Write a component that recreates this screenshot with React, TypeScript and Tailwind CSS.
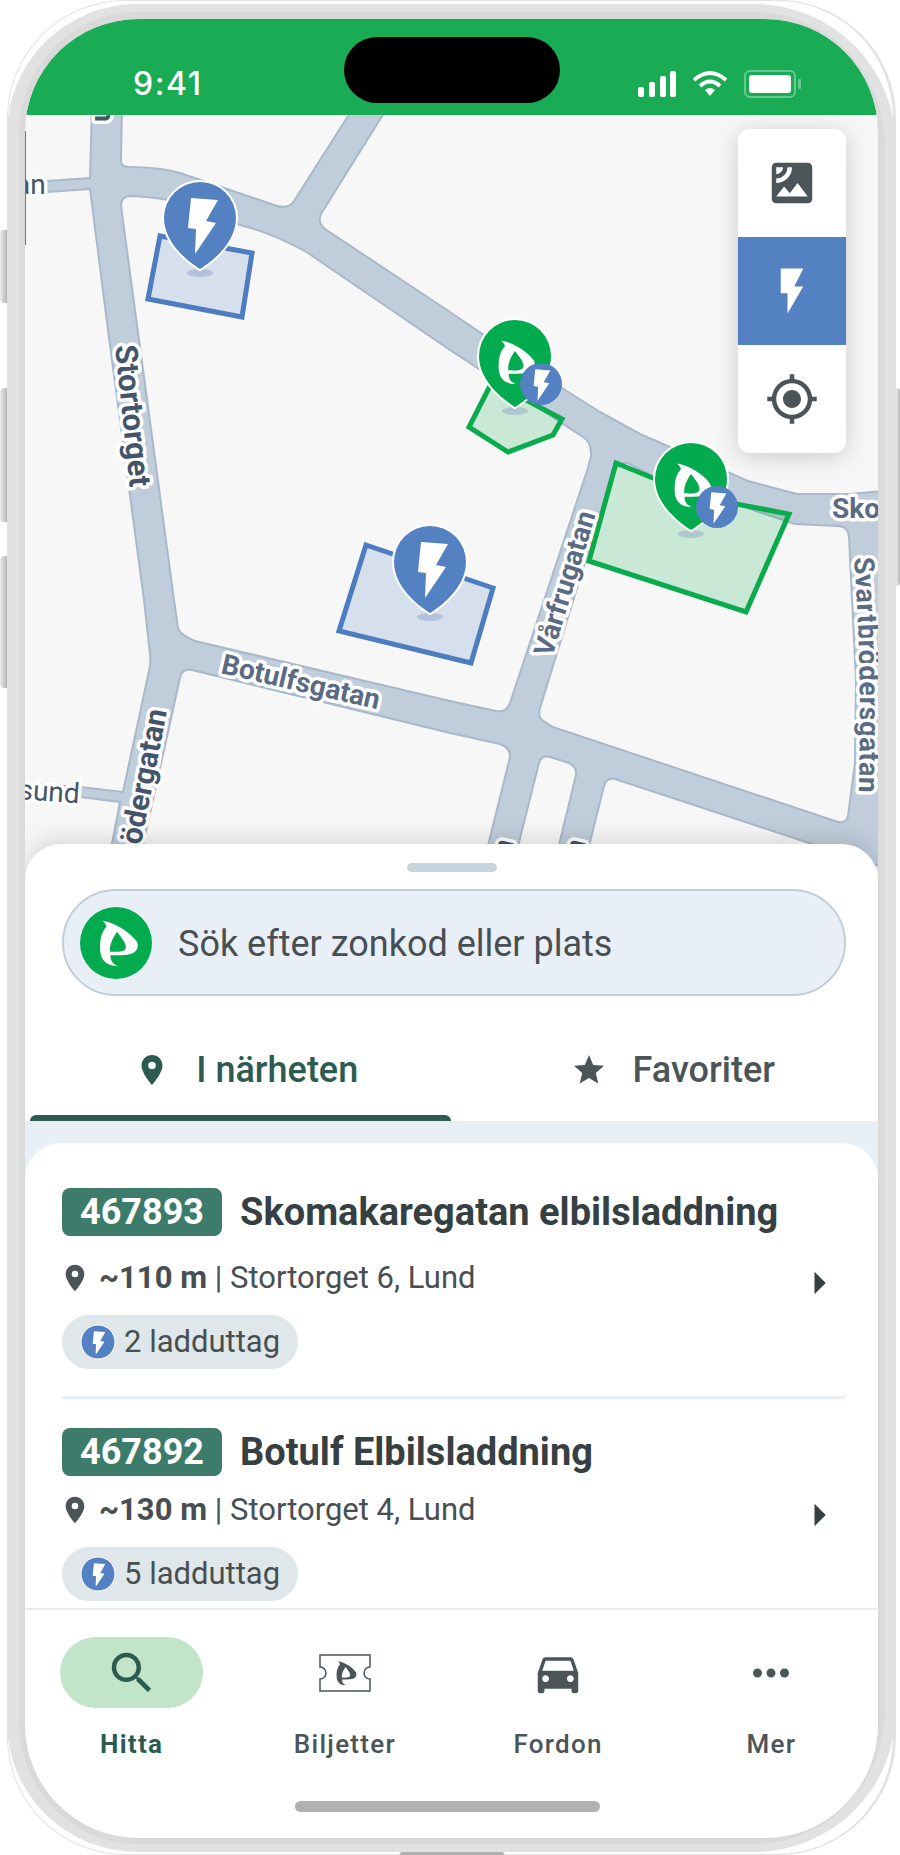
import { ReactNode } from 'react';
import { IconType } from 'react-icons';
import {
  MdArrowRight,
  MdDirectionsCar,
  MdFlashOn,
  MdMoreHoriz,
  MdMyLocation,
  MdPlace,
  MdSatellite,
  MdSearch,
  MdStar
} from 'react-icons/md';
import clsx from 'clsx';

interface Zone {
  code: string;
  name: string;
  distance: string;
  address: string;
  outlets: number;
}

interface Label {
  text: string;
  x: number;
  y: number;
  angle: number;
  size?: number;
  anchor?: 'start' | 'end';
  tone: string;
}

const zones: Zone[] = [
  { code: '467893', name: 'Skomakaregatan elbilsladdning', distance: '~110 m', address: 'Stortorget 6, Lund', outlets: 2 },
  { code: '467892', name: 'Botulf Elbilsladdning', distance: '~130 m', address: 'Stortorget 4, Lund', outlets: 5 }
];

// City blocks, drawn on top of the street colour
const blocks = [
  'M20 105 H92 L90 178 L47 181 L20 182 Z',
  'M20 192 L47 192 L90 189 L108 330 L144 600 L150 654 Q151 662 149 671 L123 792 L80 787 L20 783 Z',
  'M20 794 L80 797 L120 802 L103 890 H20 Z',
  'M122 105 L121 160 Q121 167 128 167 Q160 167 180 173 L277 206 Q289 209 294 201 L355 105 Z',
  'M389 105 L321 214 Q317 222 325 229 L450 312 L562 388 L600 412 L640 434 L732 474 L748 481 L797 494 L850 494 L885 491 V105 Z',
  'M121 206 Q121 196 131 196 Q165 197 190 206 L240 225 Q275 234 308 253 L450 350 L583 437 Q592 443 591 456 L588 468 L510 703 Q506 713 496 711 L450 701 L195 641 Q179 634 178 628 L174 600 L137 325 Z',
  'M540 708 Q537 718 545 722 L553 727 L835 821 Q846 825 848 816 L855 763 L856 680 L853 620 L849 537 Q848 526 838 526 L795 524 L652 476 L630 464 Q618 460 613 472 Z',
  'M578 890 L604 786 Q606 777 615 779 L812 844 L885 868 V890 Z',
  'M507 890 L539 763 Q541 755 550 757 L566 762 Q577 765 576 775 L548 890 Z',
  'M133 890 L180 678 Q182 668 192 670 L450 733 L500 744 Q511 748 510 757 L477 890 Z'
];

const areas = [
  { points: '160,236 252,253 242,317 148,299', color: '#4d7cc1' },
  { points: '366,545 493,588 471,663 339,631', color: '#4d7cc1' },
  { points: '492,382 562,419 553,435 508,452 469,427', color: '#0aab4d' },
  { points: '616,463 700,497 789,514 746,612 589,561', color: '#0aab4d' }
];

const labels: Label[] = [
  { text: 'n', x: 95, y: 122, angle: 90, anchor: 'end', tone: 'fill-[#44546a] font-bold' },
  { text: 'an', x: 15, y: 194, angle: 0, tone: 'fill-[#44546a]' },
  { text: 'Stortorget', x: 115, y: 346, angle: 84, size: 31, tone: 'fill-[#44546a] font-bold' },
  { text: 'ödergatan', x: 167, y: 711, angle: -79, size: 30, anchor: 'end', tone: 'fill-[#44546a] font-bold' },
  { text: 'sund', x: 18, y: 799, angle: 4, tone: 'fill-[#44546a]' },
  { text: 'Botulfsgatan', x: 220, y: 673, angle: 13, tone: 'fill-[#5a6b83] font-bold' },
  { text: 'Vårfrugatan', x: 552, y: 658, angle: -73, tone: 'fill-[#5a6b83] font-bold' },
  { text: 'Sko', x: 832, y: 518, angle: 0, tone: 'fill-[#5a6b83] font-bold' },
  { text: 'n', x: 514, y: 842, angle: -76, anchor: 'end', tone: 'fill-[#44546a] font-bold' },
  { text: 'n', x: 586, y: 842, angle: -76, anchor: 'end', tone: 'fill-[#44546a] font-bold' }
];

const halo = 'stroke-white stroke-[7px] [paint-order:stroke] [stroke-linejoin:round]';

function LeafMark() {
  return (
    <path
      fillRule="evenodd"
      d="M-40 -67 C-5 -62 40 -35 62 -5 C69 10 65 22 52 30 C35 38 5 37 -17 37 C-16 54 -10 64 5 68 C-30 70 -48 50 -48 15 C-48 -15 -43 -32 -28 -50 C-31 -57 -35 -62 -40 -67 Z M3 -34 C-10 -15 -20 5 -18 26 C0 27 18 27 27 20 C38 8 15 -18 3 -34 Z"
    />
  );
}

function Bolt() {
  return <path d="M-12 -28 L15 -26 L3 -5 L13 -3 L-8 28 L-7 3 L-15 2 Z" />;
}

function Pin({ x, y, kind }: { x: number; y: number; kind: 'charge' | 'parking' }) {
  return (
    <g transform={`translate(${x} ${y})`}>
      <ellipse cx="0" cy="54" rx="13" ry="4" fill="#8d9fcb" fillOpacity="0.45" />
      <path
        d="M0 50 C-8 45 -36 26 -36 -1 A36 36 0 0 1 36 -1 C36 26 8 45 0 50 Z"
        stroke="white"
        strokeWidth="4"
        className={clsx('[paint-order:stroke]', kind === 'charge' ? 'fill-[#5381c1]' : 'fill-[#02ab4d]')}
      />
      {kind === 'charge' ? (
        <g transform="translate(3 7)" fill="white">
          <Bolt />
        </g>
      ) : (
        <>
          <g transform="translate(-1 5) scale(0.32)" fill="white">
            <LeafMark />
          </g>
          <circle cx="26" cy="27" r="21" fill="#5381c1" />
          <g transform="translate(27 28) scale(0.56)" fill="white">
            <Bolt />
          </g>
        </>
      )}
    </g>
  );
}

function StreetMap() {
  return (
    <svg
      viewBox="25 115 853 770"
      preserveAspectRatio="xMidYMid slice"
      className="block h-[770px] w-full bg-[#c0cddb]"
      role="img"
      aria-label="Karta över Lund"
    >
      {blocks.map(d => (
        <path key={d} d={d} fill="#f7f7f7" stroke="#a9b8ca" strokeWidth="2" />
      ))}
      {areas.map(({ points, color }) => (
        <polygon key={points} points={points} fill={color} fillOpacity="0.19" stroke={color} strokeWidth="5" />
      ))}
      {labels.map(({ text, x, y, angle, size = 28, anchor, tone }, index) => (
        <text
          key={index}
          transform={`translate(${x} ${y}) rotate(${angle})`}
          fontSize={size}
          textAnchor={anchor}
          className={clsx(halo, tone)}
        >
          {text}
        </text>
      ))}
      <path id="svart" d="M854 558 Q864 690 857 850" fill="none" />
      <text fontSize="28" className={clsx(halo, 'fill-[#5a6b83] font-bold')}>
        <textPath href="#svart">Svartbrödersgatan</textPath>
      </text>
      <Pin x={200} y={219} kind="charge" />
      <Pin x={430} y={563} kind="charge" />
      <Pin x={515} y={357} kind="parking" />
      <Pin x={691} y={480} kind="parking" />
      <rect x="25" y="131" width="1" height="114" fill="#1aab55" />
    </svg>
  );
}

function StatusBar() {
  return (
    <div className="relative flex h-24 items-end justify-between bg-[#1aab55] pr-[76px] pb-[11px] pl-[108px] text-white">
      <div className="absolute top-[18px] left-1/2 h-[66px] w-[216px] -translate-x-1/2 rounded-full bg-black" />
      <span className="font-[Inter] text-[32px] leading-10 font-medium tracking-wider">9:41</span>
      <div className="flex h-10 items-center gap-4">
        <svg width="38" height="28" viewBox="0 0 38 28" fill="currentColor" aria-label="Signal">
          <rect x="0" y="17" width="6" height="10" rx="2" />
          <rect x="11" y="12" width="6" height="15" rx="2" />
          <rect x="22" y="6" width="6" height="21" rx="2" />
          <rect x="32" y="1" width="6" height="26" rx="2" />
        </svg>
        <svg width="36" height="28" viewBox="0 0 36 28" fill="none" stroke="currentColor" strokeWidth="4" aria-label="Wifi">
          <path d="M2 10 Q18 -4 34 10" />
          <path d="M8 16 Q18 7 28 16" />
          <path d="M13 20 Q18 16 23 20 L18 26 Z" fill="currentColor" stroke="none" />
        </svg>
        <svg width="58" height="28" viewBox="0 0 58 28" fill="currentColor" aria-label="Batteri">
          <rect x="1" y="1" width="50" height="26" rx="5" fill="none" stroke="white" strokeOpacity="0.35" strokeWidth="2" />
          <rect x="5" y="5" width="42" height="18" rx="3" />
          <rect x="54" y="9" width="3" height="10" rx="1" fillOpacity="0.35" />
        </svg>
      </div>
    </div>
  );
}

function MapControls() {
  return (
    <div className="absolute top-[14px] right-8 overflow-hidden rounded-xl bg-white text-[#4b5457] shadow-[0_4px_24px_rgba(0,0,0,0.18)]">
      <button aria-label="Satellitvy" className="flex size-[108px] items-center justify-center">
        <MdSatellite size={54} />
      </button>
      <button aria-label="Laddning" aria-pressed="true" className="flex size-[108px] items-center justify-center bg-[#5381c1] text-white">
        <MdFlashOn size={54} />
      </button>
      <button aria-label="Min plats" className="flex size-[108px] items-center justify-center">
        <MdMyLocation size={54} />
      </button>
    </div>
  );
}

function ZoneItem({ zone, first }: { zone: Zone; first: boolean }) {
  return (
    <li className={clsx(first ? 'border-b-[3px] border-[#e8eff5] pb-[27px]' : 'pt-[29px]')}>
      <a href={`#${zone.code}`} className="flex items-center">
        <div className="w-0 flex-1">
          <div className="flex items-center gap-[18px]">
            <span className="flex h-12 w-40 shrink-0 items-center justify-center rounded-lg bg-[#3d7b6a] text-4xl leading-none font-bold text-white">
              {zone.code}
            </span>
            <h2 className="text-[38px] leading-[48px] font-bold whitespace-nowrap text-[#363f42]">{zone.name}</h2>
          </div>
          <p className={clsx('flex h-9 items-center gap-2 text-[31px] text-[#484f52]', first ? 'mt-6' : 'mt-4')}>
            <MdPlace size={32} className="-ml-[3px] shrink-0 text-[#4b5457]" />
            <span>
              <strong className="font-bold">{zone.distance}</strong> | {zone.address}
            </span>
          </p>
          <p className="mt-[19px] flex h-[54px] w-fit items-center gap-2 rounded-full bg-[#e0e7ea] px-[18px] text-[31px] text-[#484f52]">
            <svg width="36" height="36" viewBox="-18 -18 36 36" aria-hidden="true">
              <circle r="17" fill="#5381c1" stroke="white" strokeWidth="1" />
              <g transform="translate(1 1) scale(0.42)" fill="white">
                <Bolt />
              </g>
            </svg>
            {zone.outlets} ladduttag
          </p>
        </div>
        <MdArrowRight size={54} className={clsx('shrink-0 text-[#363f42]', first && 'mt-2')} />
      </a>
    </li>
  );
}

function Tab({ icon: Icon, label, active }: { icon: IconType; label: string; active?: boolean }) {
  return (
    <button
      role="tab"
      aria-selected={!!active}
      className={clsx('flex h-[125px] flex-1 flex-col', active ? 'text-[#2c5c50]' : 'text-[#4b5457]')}
    >
      <span className="flex w-full flex-1 items-center justify-center gap-[26px] pt-7 pl-4 text-4xl font-medium">
        <Icon size={36} />
        {label}
      </span>
      <span className={clsx('mr-px ml-[5px] block h-[6px] self-stretch rounded-t-md', active && 'bg-[#2c5c50]')} />
    </button>
  );
}

function NavItem({ label, active, children }: { label: string; active?: boolean; children: ReactNode }) {
  return (
    <a href={`#${label}`} className={clsx('flex flex-1 flex-col items-center gap-5', active ? 'text-[#2c5c50]' : 'text-[#4b5457]')}>
      <span className={clsx('flex h-[71px] w-[143px] items-center justify-center rounded-full', active && 'bg-[#c2e5c9]')}>
        {children}
      </span>
      <span className={clsx('text-[26px] leading-8 tracking-wider', active ? 'font-bold' : 'font-medium')}>{label}</span>
    </a>
  );
}

function TicketIcon() {
  return (
    <svg width="52" height="38" viewBox="-26 -19 52 38" fill="currentColor" aria-hidden="true">
      <path
        d="M-25 -18 H25 V-6 A6 6 0 0 0 25 6 V18 H-25 V6 A6 6 0 0 0 -25 -6 Z"
        fill="none"
        stroke="currentColor"
        strokeWidth="1.5"
      />
      <g transform="scale(0.175)">
        <LeafMark />
      </g>
    </svg>
  );
}

const sideButton = 'absolute bg-linear-to-r from-[#ececec] to-[#b5b5b5]';

export default function App() {
  return (
    <div className="relative bg-white pr-1 pl-[7px] font-[Roboto,sans-serif]">
      <div className={clsx(sideButton, 'top-[230px] left-0 h-[73px] w-[7px] rounded-l-sm')} />
      <div className={clsx(sideButton, 'top-[388px] left-0 h-[134px] w-[7px] rounded-l-sm')} />
      <div className={clsx(sideButton, 'top-[556px] left-0 h-[132px] w-[7px] rounded-l-sm')} />
      <div className={clsx(sideButton, 'top-[388px] right-0 h-[198px] w-1 rounded-r-sm')} />

      <div className="relative pt-1 pb-[3px]">
        {/* Thin outer rim that shows past the frame at the corners */}
        <div className="absolute inset-0 rounded-[118px] border border-r-[3px] border-[#e2e2e2]" />
        <div className="absolute bottom-0 left-1/2 h-[3px] w-[105px] -translate-x-1/2 rounded-t-sm bg-[#b1b1b1]" />

        <div className="relative overflow-hidden rounded-l-[130px] rounded-r-[142px] border-x-[12px] border-y-8 border-r-[11px] border-[#e2e2e2] bg-[#dadada]">
          <div className="overflow-hidden rounded-[120px] border-x-[6px] border-t-[7px] border-r-[7px] border-b-[6px] border-[#dadada]">
            <main className="overflow-hidden rounded-[112px] bg-white">
              <StatusBar />
              <div className="relative">
                <StreetMap />
                <MapControls />
              </div>

              <section className="relative -mt-[41px] rounded-t-[36px] bg-white pt-[19px] shadow-[0_-4px_24px_rgba(0,0,0,0.14)]">
                <div className="mx-auto h-[9px] w-[90px] rounded-full bg-[#c7d3dd]" />
                <label className="mt-[17px] mr-8 ml-[37px] flex h-[107px] items-center gap-[26px] rounded-full border-2 border-[#c0cedb] bg-[#e8eff6] px-4">
                  <svg width="72" height="72" viewBox="-36 -36 72 72" className="shrink-0" aria-hidden="true">
                    <circle r="36" fill="#02ab4d" />
                    <g transform="scale(0.333)" fill="white">
                      <LeafMark />
                    </g>
                  </svg>
                  <input
                    type="text"
                    aria-label="Sök efter zonkod eller plats"
                    placeholder="Sök efter zonkod eller plats"
                    className="min-w-0 flex-1 bg-transparent pt-[3px] text-4xl text-[#484f52] outline-none placeholder:text-[#484f52]"
                  />
                </label>

                <div role="tablist" className="flex">
                  <Tab icon={MdPlace} label="I närheten" active />
                  <Tab icon={MdStar} label="Favoriter" />
                </div>

                <div className="bg-[#e8eff6] pt-[22px]">
                  <ul className="rounded-t-[36px] bg-white pt-[45px] pr-8 pb-[7px] pl-[37px]">
                    {zones.map((zone, index) => (
                      <ZoneItem key={zone.code} zone={zone} first={index === 0} />
                    ))}
                  </ul>
                </div>
              </section>

              <div className="relative bg-white">
                <nav className="flex border-t-2 border-[#e6eef4] pt-[27px]">
                  <NavItem label="Hitta" active>
                    <MdSearch size={54} />
                  </NavItem>
                  <NavItem label="Biljetter">
                    <TicketIcon />
                  </NavItem>
                  <NavItem label="Fordon">
                    <MdDirectionsCar size={54} />
                  </NavItem>
                  <NavItem label="Mer">
                    <MdMoreHoriz size={54} />
                  </NavItem>
                </nav>
                <div className="flex justify-center pt-[41px] pr-2 pb-[26px]">
                  <div className="h-[11px] w-[305px] rounded-full bg-[#b1b1b1]" />
                </div>
              </div>
            </main>
          </div>
        </div>
      </div>
    </div>
  );
}
